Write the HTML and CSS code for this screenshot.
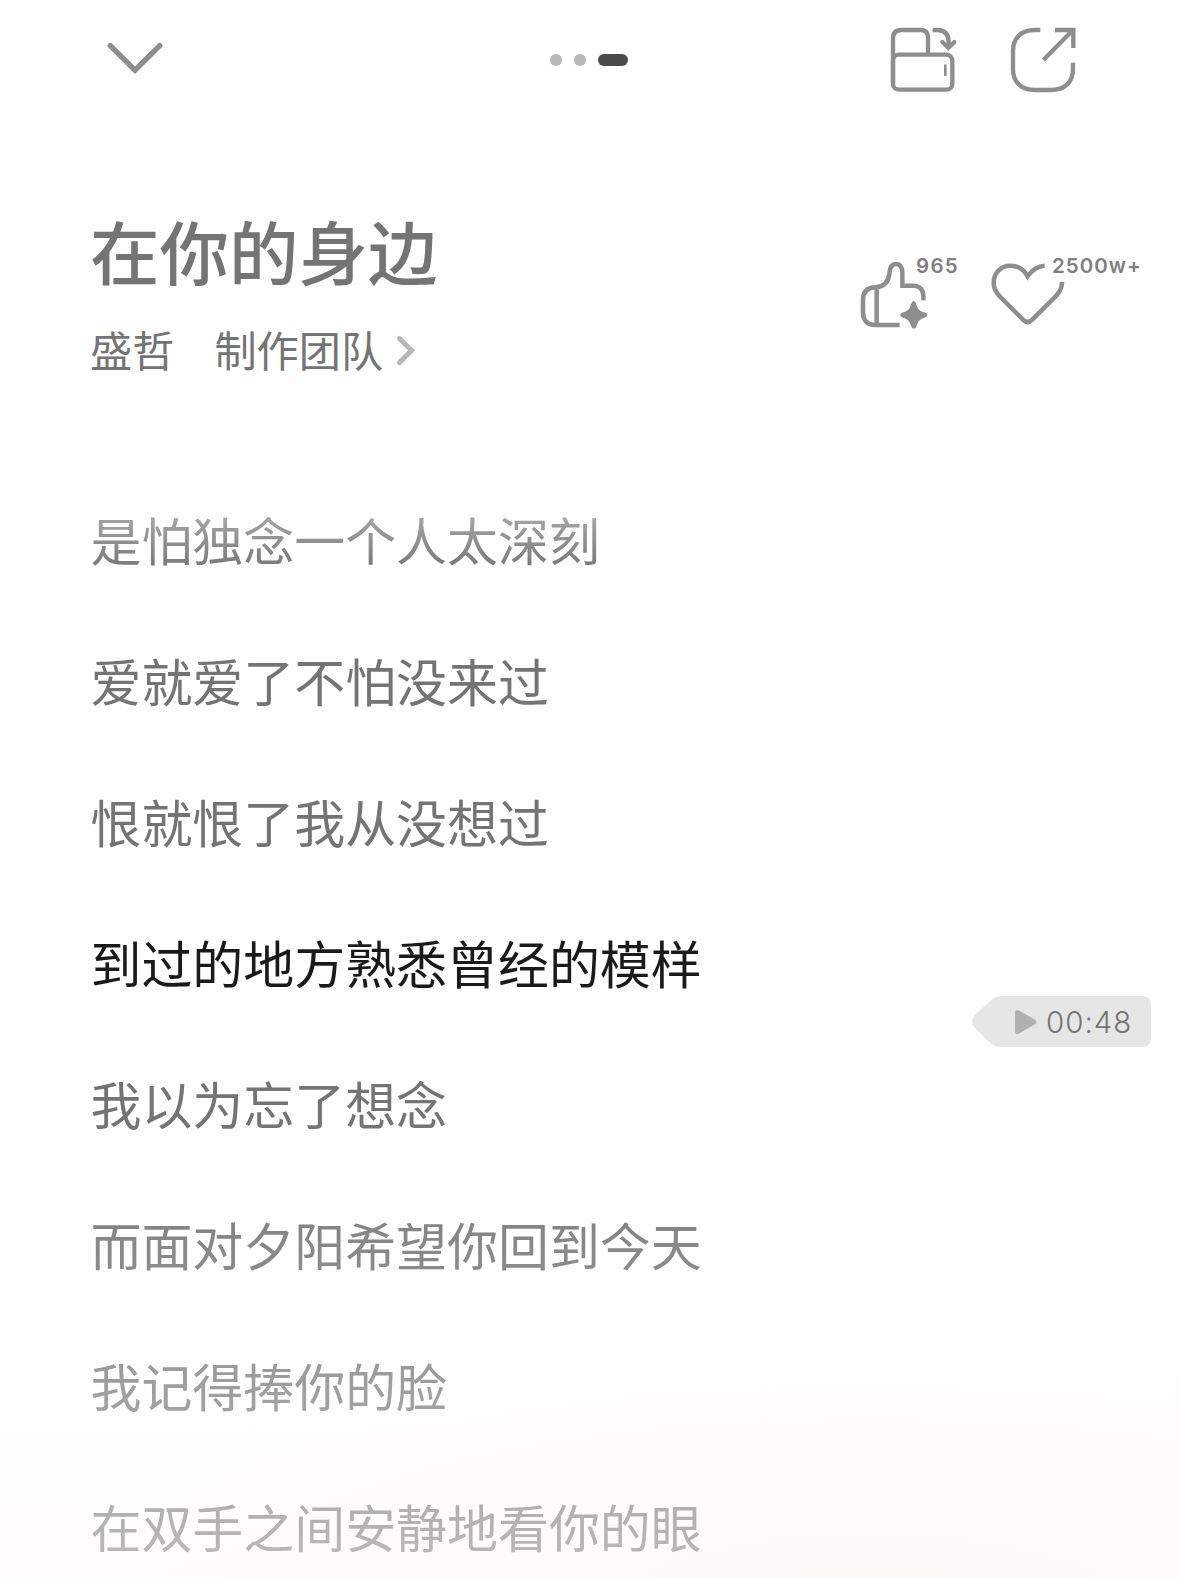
FILE: index.html
```
<!DOCTYPE html>
<html lang="zh-CN">
<head>
<meta charset="utf-8">
<title>在你的身边</title>
<link rel="stylesheet" href="styles.css">
</head>
<body>
<main class="player">
  <header class="topbar">
    <svg class="collapse" viewBox="0 0 60 36"><path d="M5.3 5.7 30 30.2 54.7 5.7"/></svg>
    <div class="pager"><i></i><i></i><i class="current"></i></div>
    <div class="tools">
      <svg class="wallet" viewBox="60 48 204 198">
        <rect x="69" y="131" width="178" height="105" rx="18"/>
        <path d="M69 215V82Q69 57 94 57H152Q174 57 174 79V130"/>
        <path d="M188 57H203Q236 58 236 94V108"/>
        <path class="round" d="M217 93 235 110 253 93"/>
        <path class="slot" d="M226 164V192"/>
      </svg>
      <svg class="share" viewBox="420 48 204 204">
        <path d="M511 60H494C451 60 429 88 429 122V177C429 218 455 240 495 240H542C585 240 609 216 609 177V158"/>
        <path d="M520 150 608 61M555 60H610V114"/>
      </svg>
    </div>
  </header>

  <section class="song">
    <div class="info">
      <h1>在你的身边</h1>
      <div class="credits">
        <span class="artist">盛哲</span><span>制作团队</span>
        <svg class="more" viewBox="0 0 20 32"><path d="M3.5 3.5 15.5 15.5 3.5 27.5"/></svg>
      </div>
    </div>
    <div class="actions">
      <div class="like">
        <svg viewBox="60 60 204 210">
          <path d="M179 255H105C81 255 69 241 69 217V180C69 155 81 143 106 142C137 140 146 121 148 101C149 84 154 72 168 72C182 72 187 83 187 98V137H221C244 138 252 154 250 181M110 145V255"/>
          <path class="spark" d="M221 183C225 183 228 188 229 194C234 208 239 213 253 217Q262 220 262 225Q262 230 253 233C240 237 234 243 230 257Q227 266 221 266Q216 266 213 257C209 243 203 237 189 233Q180 230 180 225Q180 220 189 217C203 213 209 207 213 194Q216 183 221 183Z"/>
        </svg>
        <span>965</span>
      </div>
      <div class="fav">
        <svg viewBox="453 60 228 210">
          <path d="M614 77C594 78 576 90 563 109C551 87 532 77 511 77C481 77 461 100 461 130C461 148 468 158 481 171L549 239Q563 253 577 239L645 171C659 158 666 146 666 126"/>
        </svg>
        <span>2500w+</span>
      </div>
    </div>
  </section>

  <section class="lyrics">
    <p>是怕独念一个人太深刻</p>
    <p>爱就爱了不怕没来过</p>
    <p>恨就恨了我从没想过</p>
    <p class="active">到过的地方熟悉曾经的模样</p>
    <p>我以为忘了想念</p>
    <p>而面对夕阳希望你回到今天</p>
    <p>我记得捧你的脸</p>
    <p>在双手之间安静地看你的眼</p>
  </section>

  <div class="seek">
    <svg class="tag" viewBox="0 0 180 52"><path d="M30 0H170Q179 0 179 9V42Q179 51 170 51H30C23 51 20 48 16 45L3 32Q-3 26 3 19L16 7C20 3 24 0 30 0Z"/></svg>
    <svg class="play" viewBox="0 0 22 26"><path d="M0 3.500Q0 0 3.500 1.200L20.500 11Q22.500 13 20.500 15L3.500 24.800Q0 26 0 22.500Z"/></svg>
    <span>00:48</span>
  </div>
</main>
</body>
</html>
```
FILE: styles.css
```
* { box-sizing: border-box; }

body {
  margin: 0;
  background: #fefefe;
  font-family: "Noto Sans CJK SC", sans-serif;
  color: #747474;
}

.player {
  position: relative;
  height: 1578px;
  overflow: hidden;
  background:
    radial-gradient(ellipse 850px 250px at 870px 1610px, #fef9f5 0%, #fefcfa 50%, rgba(254, 254, 254, 0) 100%),
    linear-gradient(#fefefe 1320px, #fefdfc 1578px);
}

svg {
  display: block;
  fill: none;
  stroke: #8e8e8e;
}

/* top bar */
.topbar {
  display: grid;
  grid-template-columns: 1fr auto 1fr;
  align-items: center;
  height: 120px;
  padding: 0 101px 0 105px;
}

.collapse {
  width: 60px;
  height: 36px;
  margin-bottom: 4px;
  stroke-width: 5.4;
  stroke-linecap: round;
}

.pager {
  display: flex;
  gap: 12px;
  margin-right: 6px;
}

.pager i {
  width: 12px;
  height: 12px;
  border-radius: 6px;
  background: #b8b8b8;
}

.pager .current {
  width: 30px;
  background: #4a4a4a;
}

.tools {
  display: flex;
  justify-content: flex-end;
  gap: 52px;
}

.tools svg { stroke-width: 13; }
.wallet { width: 68px; height: 66px; margin-top: 1px; }
.share { width: 68px; height: 68px; }
.tools .round { stroke-linecap: round; }
.tools .slot { stroke-width: 8; stroke-linecap: round; }

/* song heading */
.song {
  display: flex;
  justify-content: space-between;
  height: 349px;
  padding: 80px 20px 0 90px;
}

h1 {
  margin: 0;
  font-size: 69.500px;
  line-height: 100px;
  font-weight: 500;
}

.credits {
  display: flex;
  align-items: center;
  margin-top: 19px;
  font-size: 42.200px;
  line-height: 60px;
}

.artist { margin-right: 40px; }

.more {
  width: 20px;
  height: 32px;
  margin: 3px 0 0 13px;
  stroke: #b8b8b8;
  stroke-width: 5;
  stroke-linecap: round;
}

.actions {
  display: flex;
  align-items: flex-start;
  padding-top: 60px;
  font: 600 20.500px/24px Inter, sans-serif;
  color: #808080;
}

.actions svg {
  height: 70px;
  stroke-width: 13.500;
}

.like, .fav { display: flex; }
.like { width: 131px; }
.like svg { width: 68px; }
.fav { width: 168px; }
.fav svg { width: 76px; }
.like span { margin: -6px 0 0 -12px; letter-spacing: 1.300px; }
.fav span { margin: -6px 0 0 -15px; letter-spacing: 1px; }
.actions .spark { fill: #8e8e8e; stroke: none; }

/* lyrics fade out towards both ends */
.lyrics {
  height: 1109px;
  padding: 0 90.500px;
  -webkit-mask-image: linear-gradient(rgba(0,0,0,.6) 40px, #000 104px, #000 650px, rgba(0,0,0,.5) 1090px);
  mask-image: linear-gradient(rgba(0,0,0,.6) 40px, #000 104px, #000 650px, rgba(0,0,0,.5) 1090px);
}

.lyrics p {
  margin: 0;
  font-size: 50.950px;
  line-height: 141px;
}

.lyrics .active { color: #1a1a1a; }

/* seek marker floating above the lyrics */
.seek {
  position: absolute;
  left: 972px;
  top: 996px;
  width: 180px;
  height: 52px;
  display: flex;
  align-items: center;
  padding-left: 43px;
  font: 300 29.500px/52px Inter, sans-serif;
  letter-spacing: 1px;
}

.seek .tag {
  position: absolute;
  inset: 0;
  fill: #e6e6e6;
  stroke: none;
}

.seek .play {
  position: relative;
  width: 22px;
  height: 26px;
  fill: #b0b0b0;
  stroke: none;
}

.seek span {
  position: relative;
  margin-left: 9px;
}
```
